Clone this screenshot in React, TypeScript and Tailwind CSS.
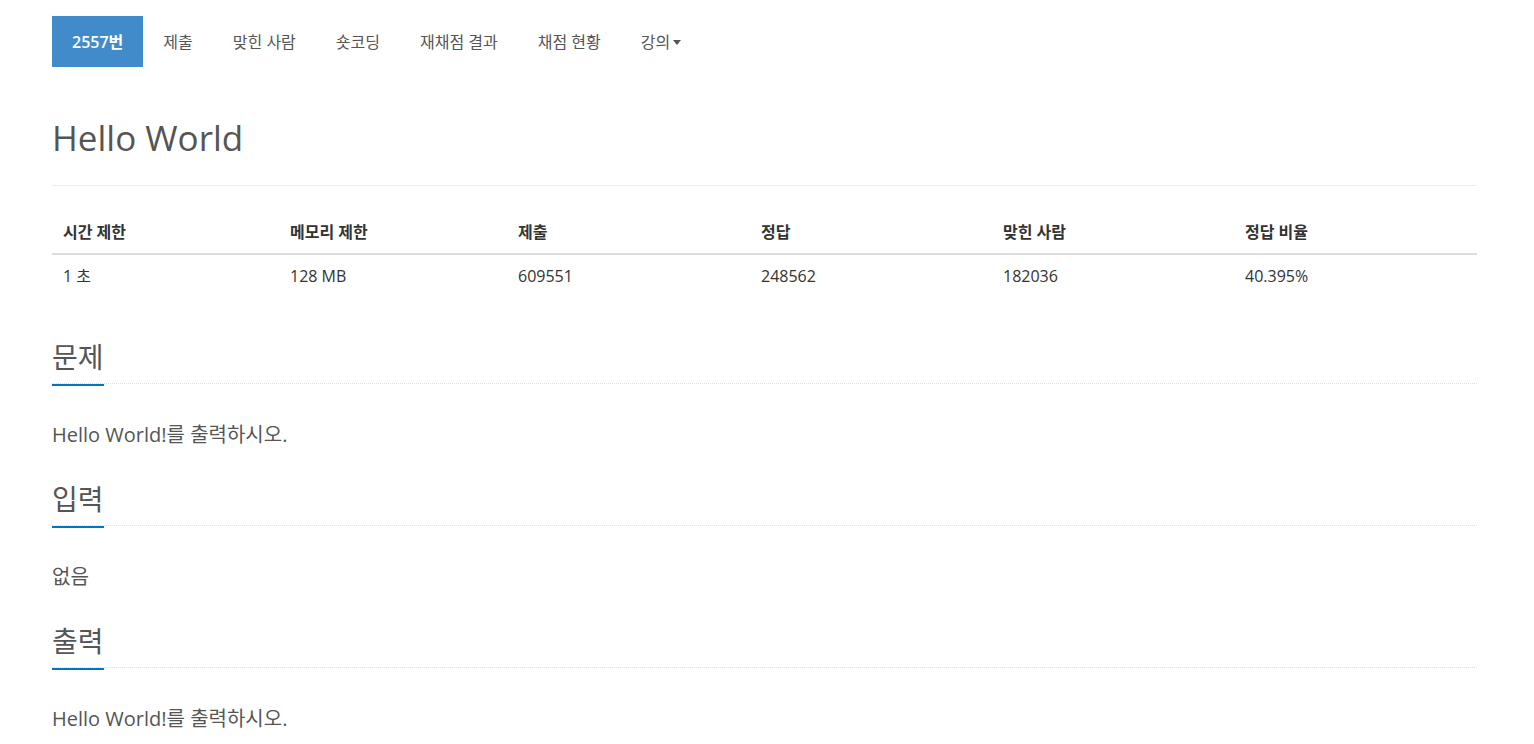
import type { ReactNode } from 'react';

const font = "font-['Open_Sans','Noto_Sans_CJK_KR',sans-serif]";

const tabs = ['제출', '맞힌 사람', '숏코딩', '재채점 결과', '채점 현황'];

const stats = [
  { label: '시간 제한', value: '1 초', w: 'w-[227px]' },
  { label: '메모리 제한', value: '128 MB', w: 'w-[228px]' },
  { label: '제출', value: '609551', w: 'w-[243px]' },
  { label: '정답', value: '248562', w: 'w-[242px]' },
  { label: '맞힌 사람', value: '182036', w: 'w-[242px]' },
  { label: '정답 비율', value: '40.395%', w: '' },
];

function Section({ title, first, children }: { title: string; first?: boolean; children: ReactNode }) {
  return (
    <section className={first ? 'mt-[43px]' : 'mt-[32px]'}>
      {/* headline with blue underline over a dotted rule */}
      <div className="border-b border-dotted border-[#dddddd]">
        <h2 className="inline-block -mb-[3px] border-b-2 border-[#0076c0] pb-[10px] text-[28px] leading-[34px] text-[#555555]">
          {title}
        </h2>
      </div>
      <p className="mt-[36px] text-[20px] leading-[30px] text-[#555555]">{children}</p>
    </section>
  );
}

export default function App(): JSX.Element {
  return (
    <div className={`${font} min-h-screen bg-white`}>
      <div className="ml-[52px] w-[1425px]">
        {/* Problem tabs */}
        <nav className="mt-4 flex items-center">
          <a className="flex h-[51px] items-center bg-[#428bca] px-5 text-[16px] font-semibold text-white">
            2557번
          </a>
          {tabs.map((t) => (
            <a key={t} className="flex h-[51px] items-center px-5 text-[16px] text-[#555555]">
              {t}
            </a>
          ))}
          <a className="flex h-[51px] items-center px-5 text-[16px] text-[#555555]">
            강의
            <span className="ml-[3px] mt-[2px] h-0 w-0 border-x-[4.5px] border-t-[5px] border-x-transparent border-t-[#555555]" />
          </a>
        </nav>

        {/* Title */}
        <div className="mt-[51px] border-b border-[#eeeeee] pb-[27px]">
          <h1 className="text-[35px] leading-[40px] text-[#555555]">Hello World</h1>
        </div>

        {/* Limits table */}
        <table className="mt-[25px] w-full table-fixed border-collapse text-left text-[#333333]">
          <thead>
            <tr className="border-b-2 border-[#dddddd]">
              {stats.map((s) => (
                <th key={s.label} className={`${s.w} px-[11px] py-[10px] text-[16px] font-bold leading-[22px]`}>
                  {s.label}
                </th>
              ))}
            </tr>
          </thead>
          <tbody>
            <tr>
              {stats.map((s) => (
                <td key={s.label} className="px-[11px] py-[10px] text-[16px] leading-[22px]">
                  {s.value}
                </td>
              ))}
            </tr>
          </tbody>
        </table>

        <Section title="문제" first>
          Hello World!를 출력하시오.
        </Section>
        <Section title="입력">없음</Section>
        <Section title="출력">Hello World!를 출력하시오.</Section>
      </div>
    </div>
  );
}
